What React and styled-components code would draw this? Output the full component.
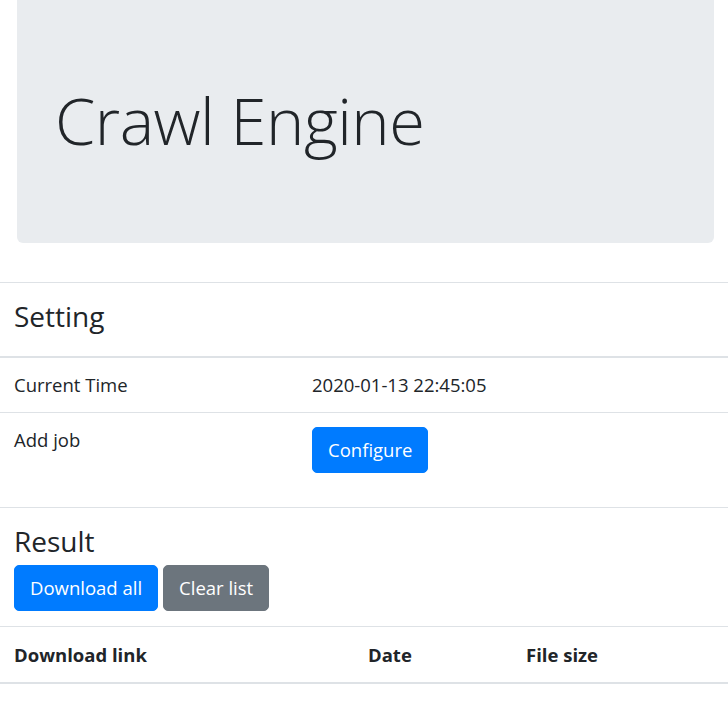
import React from 'react';
import styled, { createGlobalStyle } from 'styled-components';

const GlobalStyle = createGlobalStyle`
  body {
    margin: 0;
    font-family: "Open Sans", "Noto Sans", "Liberation Sans", sans-serif;
    font-size: 18.5px;
    line-height: 30px;
    color: #212529;
    background: #fff;
  }
`;

const Jumbotron = styled.div`
  margin: 0 14px 0 17px;
  height: 243px;
  background-color: #e9ecef;
  border-radius: 0 0 6px 6px;
  display: flex;
  align-items: center;
  padding-left: 38px;
  box-sizing: border-box;
`;

const Title = styled.h1`
  margin: 0 0 4px 0;
  font-size: 65px;
  font-weight: 300;
  line-height: 1.2;
  letter-spacing: -0.5px;
`;

const Table = styled.table`
  width: 100%;
  border-collapse: collapse;
  margin-top: ${p => p.$top || 0}px;
`;

const HeadCell = styled.th`
  text-align: left;
  vertical-align: top;
  font-weight: 700;
  padding: ${p => p.$pad || '13px 14px 12px'};
  border-top: 1px solid #dee2e6;
  border-bottom: 2px solid #dee2e6;
  width: ${p => (p.$w ? `${p.$w}px` : 'auto')};
  box-sizing: border-box;
`;

const Cell = styled.td`
  vertical-align: top;
  padding: 12px 14px;
  border-bottom: 1px solid #dee2e6;
  width: ${p => (p.$w ? `${p.$w}px` : 'auto')};
  box-sizing: border-box;
`;

const Heading = styled.h4`
  margin: 0;
  font-size: 28px;
  font-weight: 500;
  line-height: 36px;
`;

const ResultBlock = styled.section`
  padding: 15px 14px 0;
`;

const ButtonRow = styled.div`
  display: flex;
  gap: 5px;
  margin-top: 6px;
`;

const Button = styled.button`
  font-family: inherit;
  font-size: 18.5px;
  line-height: 30px;
  height: 46px;
  box-sizing: border-box;
  padding: 7px 15px;
  border: 1px solid ${p => (p.$variant === 'secondary' ? '#6c757d' : '#007bff')};
  background-color: ${p => (p.$variant === 'secondary' ? '#6c757d' : '#007bff')};
  color: #fff;
  border-radius: 5px;
  margin: ${p => p.$margin || '0'};
  cursor: pointer;
`;

export default function App() {
  return (
    <>
      <GlobalStyle />
      <Jumbotron>
        <Title>Crawl Engine</Title>
      </Jumbotron>

      <Table $top={39}>
        <thead>
          <tr>
            <HeadCell colSpan={2} $pad="15px 14px 22px">
              <Heading>Setting</Heading>
            </HeadCell>
          </tr>
        </thead>
        <tbody>
          <tr>
            <Cell $w={298}>Current Time</Cell>
            <Cell>2020-01-13 22:45:05</Cell>
          </tr>
          <tr>
            <Cell $w={298}>Add job</Cell>
            <Cell>
              <Button $margin="2px 0 22px">Configure</Button>
            </Cell>
          </tr>
        </tbody>
      </Table>

      <ResultBlock>
        <Heading>Result</Heading>
        <ButtonRow>
          <Button>Download all</Button>
          <Button $variant="secondary">Clear list</Button>
        </ButtonRow>
      </ResultBlock>

      <Table $top={15}>
        <thead>
          <tr>
            <HeadCell $w={354}>Download link</HeadCell>
            <HeadCell $w={158}>Date</HeadCell>
            <HeadCell>File size</HeadCell>
          </tr>
        </thead>
      </Table>
    </>
  );
}
